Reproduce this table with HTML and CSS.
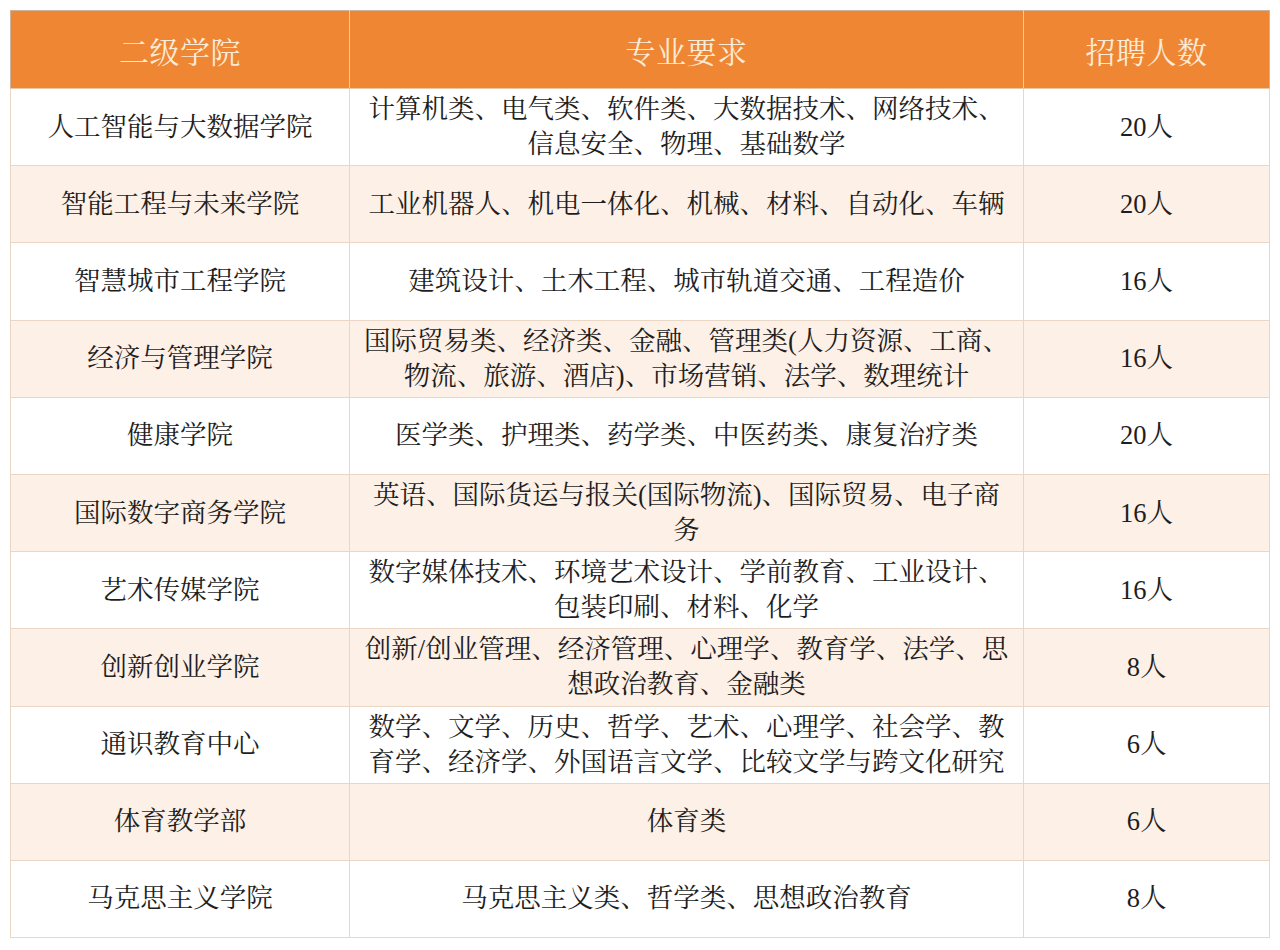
FILE: index.html
```html
<!DOCTYPE html>
<html lang="zh-CN">
<head>
<meta charset="utf-8">
<title>招聘</title>
<link rel="stylesheet" href="styles.css">
</head>
<body>
<table class="recruit">
  <colgroup>
    <col class="c-college">
    <col class="c-major">
    <col class="c-count">
  </colgroup>
  <thead>
    <tr class="head">
      <th>二级学院</th>
      <th>专业要求</th>
      <th>招聘人数</th>
    </tr>
  </thead>
  <tbody>
    <tr><td>人工智能与大数据学院</td><td>计算机类、电气类、软件类、大数据技术、网络技术、<br>信息安全、物理、基础数学</td><td>20人</td></tr>
    <tr class="alt"><td>智能工程与未来学院</td><td>工业机器人、机电一体化、机械、材料、自动化、车辆</td><td>20人</td></tr>
    <tr><td>智慧城市工程学院</td><td>建筑设计、土木工程、城市轨道交通、工程造价</td><td>16人</td></tr>
    <tr class="alt"><td>经济与管理学院</td><td>国际贸易类、经济类、金融、管理类(人力资源、工商、<br>物流、旅游、酒店)、市场营销、法学、数理统计</td><td>16人</td></tr>
    <tr><td>健康学院</td><td>医学类、护理类、药学类、中医药类、康复治疗类</td><td>20人</td></tr>
    <tr class="alt"><td>国际数字商务学院</td><td>英语、国际货运与报关(国际物流)、国际贸易、电子商<br>务</td><td>16人</td></tr>
    <tr><td>艺术传媒学院</td><td>数字媒体技术、环境艺术设计、学前教育、工业设计、<br>包装印刷、材料、化学</td><td>16人</td></tr>
    <tr class="alt"><td>创新创业学院</td><td>创新/创业管理、经济管理、心理学、教育学、法学、思<br>想政治教育、金融类</td><td>8人</td></tr>
    <tr><td>通识教育中心</td><td>数学、文学、历史、哲学、艺术、心理学、社会学、教<br>育学、经济学、外国语言文学、比较文学与跨文化研究</td><td>6人</td></tr>
    <tr class="alt"><td>体育教学部</td><td>体育类</td><td>6人</td></tr>
    <tr><td>马克思主义学院</td><td>马克思主义类、哲学类、思想政治教育</td><td>8人</td></tr>
  </tbody>
</table>
</body>
</html>
```

FILE: styles.css
```css
html, body {
  margin: 0;
  padding: 0;
  background: #ffffff;
}
body {
  padding: 10px;
  font-family: "Liberation Serif", "Noto Serif CJK SC", "Noto Sans CJK SC", serif;
  color: #1e1e1e;
}
.recruit {
  border-collapse: collapse;
  width: 1259px;
  table-layout: fixed;
  border: 1px solid #cdb39c;
}
.c-college { width: 339px; }
.c-major { width: 674px; }
.c-count { width: 246px; }

.head th {
  background: #ee8634;
  color: #fdebd6;
  font-weight: normal;
  font-size: 30px;
  height: 77px;
  padding: 0;
  text-align: center;
  vertical-align: middle;
  border-left: 1px solid #f6c9a2;
  border-bottom: 1px solid #e9c6a6;
  letter-spacing: 0.5px;
}
.head th:first-child { border-left: none; }

.recruit td {
  font-size: 26.5px;
  line-height: 35px;
  height: 76.2px;
  padding: 0;
  text-align: center;
  vertical-align: middle;
  border: 1px solid #ead6c5;
  white-space: nowrap;
}
.recruit tr.alt td {
  background: #fdf0e7;
}
```
